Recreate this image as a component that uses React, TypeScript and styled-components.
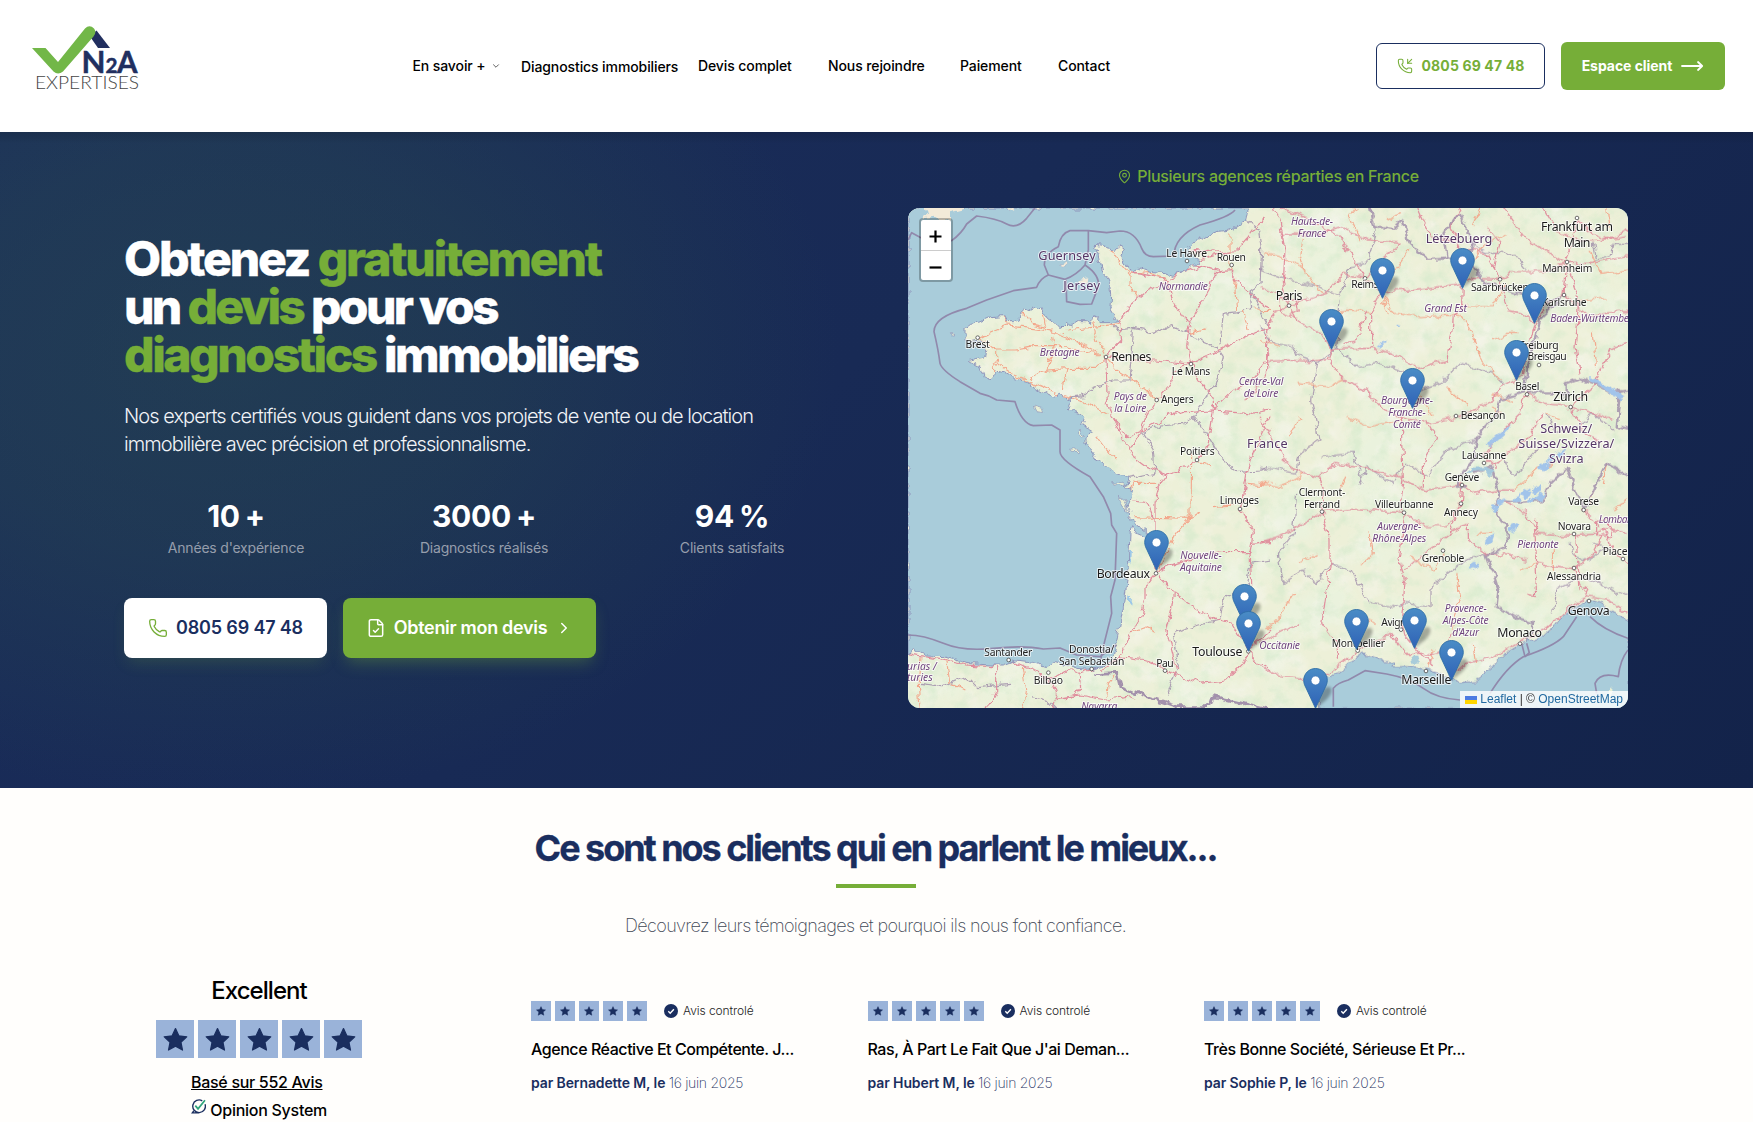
import React from "react";
import styled, { createGlobalStyle } from "styled-components";
import { ChevronDown, ChevronRight, FileCheck, MapPin, Phone, PhoneIncoming } from "lucide-react";

const NAVY = "#1a2e5f";
const GREEN = "#76ae38";

const GlobalStyle = createGlobalStyle`
  *, *::before, *::after { box-sizing: border-box; }
  body { margin: 0; background: #fffefc; font-family: Inter, "Noto Sans", sans-serif; color: #000; -webkit-font-smoothing: antialiased; }
  h1, h2, h3, p { margin: 0; }
  a { color: inherit; text-decoration: none; }
`;

const Page = styled.div`height: 1122px; overflow: hidden;`;

/* ---------- header ---------- */
const Header = styled.header`
  height: 132px; background: #fff; display: flex; align-items: flex-start;
  padding: 26px 28px 0 32px;
`;
const LogoLink = styled.a`display: block; width: 108px; height: 66px; flex: none;`;
const Nav = styled.nav`
  display: flex; flex: none; margin: 29px 0 0 272.500px; font-size: 14px; font-weight: 500; line-height: 20px;
`;
const NavItem = styled.a<{ $w: number; $gap: number; $drop?: number }>`
  display: flex; align-items: center; gap: 5px; white-space: nowrap; width: ${p => p.$w}px;
  margin-right: ${p => p.$gap}px; padding-top: ${p => p.$drop ?? 0}px; letter-spacing: -0.1px;
`;
const HeaderActions = styled.div`display: flex; align-items: center; gap: 16px; margin: 16px 0 0 auto;`;
const PhoneButton = styled.a`
  width: 169px; height: 46px; border: 1px solid ${NAVY}; border-radius: 6px; color: ${GREEN};
  display: flex; align-items: center; justify-content: center; gap: 9px; font-size: 14px; line-height: 20px; font-weight: 700;
  letter-spacing: 0.13px; white-space: nowrap; padding-bottom: 1px;
`;
const ClientButton = styled.a`
  width: 164px; height: 48px; border-radius: 6px; background: ${GREEN}; color: #fff; letter-spacing: -0.05px; padding-bottom: 1px;
  display: flex; align-items: center; justify-content: center; gap: 9px; font-size: 14px; font-weight: 700; white-space: nowrap;
`;

/* ---------- hero ---------- */
const Hero = styled.section`
  height: 656px; padding: 0 125px 0 124px; display: grid; grid-template-columns: 720px 720px; column-gap: 64px; align-items: start;
  background:
    linear-gradient(180deg, rgba(0,0,0,.12), transparent 12px),
    radial-gradient(ellipse 620px 450px at 220px 220px, rgba(50,92,75,.34), rgba(50,92,75,.25) 45%, transparent 100%),
    linear-gradient(135deg, #1a2d5b 0%, #182a55 45%, #13234a 100%);
`;
const Pitch = styled.div`padding-top: 103px;`;
const Title = styled.h1`
  font-size: 48px; line-height: 48px; font-weight: 800; color: #fff; white-space: nowrap; -webkit-text-stroke: 0.4px;
`;
const TitleLine = styled.span<{ $track: number }>`display: block; letter-spacing: ${p => p.$track}px;`;
const Accent = styled.span`color: ${GREEN};`;
const Lead = styled.p`
  margin-top: 23px; font-size: 20px; line-height: 28px; font-weight: 300; letter-spacing: -0.94px; color: #f1f3f7; white-space: nowrap;
`;
const Stats = styled.div`margin-top: 40px; display: grid; grid-template-columns: repeat(3, 1fr); gap: 24px; text-align: center;`;
const StatValue = styled.div`
  font-size: 30px; line-height: 36px; font-weight: 700; letter-spacing: -0.3px; color: #fff; display: flex; gap: 5px; justify-content: center;
`;
const StatLabel = styled.div`margin-top: 4px; font-size: 14px; line-height: 20px; letter-spacing: -0.2px; color: #969eac;`;
const Buttons = styled.div`margin-top: 40px; display: flex; gap: 16px;`;
const Cta = styled.a<{ $solid?: boolean }>`
  height: 60px; width: ${p => (p.$solid ? 253 : 203)}px; border-radius: 8px; display: flex; align-items: center; padding-bottom: 1px;
  justify-content: center; gap: 8px; font-size: 18px; font-weight: 600; white-space: nowrap; letter-spacing: ${p => (p.$solid ? -0.3 : -0.17)}px;
  background: ${p => (p.$solid ? GREEN : "#fff")}; color: ${p => (p.$solid ? "#fff" : NAVY)};
  box-shadow: 0 8px 16px -4px rgba(118,174,56,${p => (p.$solid ? 0.35 : 0.2)});
`;
const Agencies = styled.div`padding-top: 32px;`;
const AgencyTitle = styled.div`
  display: flex; justify-content: center; align-items: center; gap: 5px; height: 24px; margin-bottom: 20px;
  color: ${GREEN}; font-size: 16px; font-weight: 500; letter-spacing: -0.3px;
`;

/* ---------- map ---------- */
const MapFrame = styled.div`position: relative; width: 720px; height: 500px; border-radius: 12px; overflow: hidden; background: #aad3df;`;
const MapArt = styled.svg`display: block; width: 720px; height: 500px;`;
const Pin = styled.svg`position: absolute; width: 50px; height: 42px; overflow: visible;`;
const ZoomControl = styled.div`
  position: absolute; left: 10.500px; top: 10px; width: 34px; border: 2px solid rgba(0,0,0,.25); border-radius: 4px; background-clip: padding-box; background-color: #fff;
`;
const ZoomButton = styled.div`
  height: 30px; padding-top: 3px; display: flex; align-items: center; justify-content: center;
  & + & { border-top: 1px solid #ccc; }
`;
const Attribution = styled.div`
  position: absolute; right: 0; bottom: 0; height: 17px; padding: 0 5px; background: rgba(255,255,255,.8);
  display: flex; align-items: center; gap: 3px; font: 12px/17px "Liberation Sans", Arial, sans-serif; color: #333; white-space: nowrap;
`;
const MapLink = styled.a`color: #2169a0;`;
const TextLabel = styled.text<{ $kind: Kind }>`
  font-family: "Noto Sans", sans-serif; text-anchor: middle; paint-order: stroke; stroke: rgba(255,255,255,.7); stroke-width: 6px; stroke-linejoin: round;
  font-size: ${p => ({ town: 31, city: 37, region: 31, country: 38 })[p.$kind]}px;
  font-style: ${p => (p.$kind === "region" ? "italic" : "normal")};
  fill: ${p => ({ town: "#1e1e1e", city: "#1a1a1a", region: "#6f447e", country: "#553666" })[p.$kind]};
`;

type Kind = "town" | "city" | "region" | "country";
type Label = [string, number, number, number, Kind];

/* Both halves of the map use their own origin, three units to a pixel. */
const westLabels: Label[] = [
  ["Guernsey", 501, 330, 172, "country"], ["Jersey", 545, 419, 110, "country"], ["Le Havre", 860, 321, 122, "town"],
  ["Rouen", 994, 332, 88, "town"], ["Normandie", 850, 419, 148, "region"], ["Brest", 233, 595, 73, "town"],
  ["Bretagne", 479, 618, 120, "region"], ["Rennes", 694, 633, 121, "city"], ["Le Mans", 873, 674, 115, "town"],
  ["Centre-Val", 1083, 706, 134, "region"], ["de Loire", 1083, 741, 104, "region"], ["Pays de", 691, 751, 99, "region"],
  ["la Loire", 691, 786, 97, "region"], ["Angers", 832, 760, 98, "town"], ["Poitiers", 892, 916, 104, "town"],
  ["France", 1102, 893, 122, "country"], ["Limoges", 1018, 1063, 118, "town"], ["Nouvelle-", 903, 1227, 124, "region"],
  ["Aquitaine", 903, 1263, 126, "region"], ["Bordeaux", 670, 1283, 160, "city"], ["Toulouse", 952, 1517, 150, "city"],
  ["Pau", 795, 1550, 52, "town"], ["Donostia/", 575, 1508, 136, "town"], ["San Sebastián", 575, 1544, 196, "town"],
  ["Santander", 325, 1519, 144, "town"], ["Bilbao", 445, 1603, 88, "town"], ["Asturias /", 45, 1559, 130, "region"],
  ["Asturies", 44, 1594, 108, "region"], ["Navarra", 598, 1680, 108, "region"],
];
const eastLabels: Label[] = [
  ["Hauts-de-", 156, 75, 126, "region"], ["France", 156, 110, 86, "region"], ["Lëtzebuerg", 597, 130, 200, "country"],
  ["Frankfurt am", 951, 94, 216, "city"], ["Main", 951, 140, 80, "city"], ["Mannheim", 922, 217, 150, "town"],
  ["Reims", 315, 265, 82, "town"], ["Saarbrücken", 720, 272, 174, "town"], ["Karlsruhe", 913, 317, 134, "town"],
  ["Baden-Württemberg", 1003, 365, 264, "region"], ["Paris", 87, 299, 80, "city"], ["Grand Est", 557, 336, 128, "region"],
  ["Freiburg", 837, 446, 118, "town"], ["im Breisgau", 841, 481, 158, "town"], ["Bourgogne-", 441, 611, 156, "region"],
  ["Franche-", 441, 647, 112, "region"], ["Comté", 441, 683, 84, "region"], ["Besançon", 669, 658, 134, "town"],
  ["Basel", 802, 570, 72, "town"], ["Zürich", 932, 604, 104, "city"], ["Schweiz/", 919, 700, 156, "country"],
  ["Suisse/Svizzera/", 919, 744, 288, "country"], ["Svizra", 919, 790, 104, "country"], ["Lausanne", 672, 778, 134, "town"],
  ["Genève", 606, 842, 104, "town"], ["Annecy", 603, 948, 102, "town"], ["Clermont-", 186, 888, 140, "town"],
  ["Ferrand", 186, 924, 108, "town"], ["Villeurbanne", 433, 925, 176, "town"], ["Auvergne-", 418, 990, 132, "region"],
  ["Rhône-Alpes", 418, 1025, 162, "region"], ["Grenoble", 549, 1086, 128, "town"], ["Varese", 971, 916, 92, "town"],
  ["Novara", 943, 990, 100, "town"], ["Lombardia", 1083, 970, 134, "region"], ["Piemonte", 834, 1045, 124, "region"],
  ["Piacenza", 1090, 1066, 124, "town"], ["Alessandria", 942, 1139, 162, "town"], ["Genova", 986, 1245, 126, "city"],
  ["Provence-", 617, 1237, 126, "region"], ["Alpes-Côte", 617, 1273, 138, "region"], ["d'Azur", 617, 1308, 80, "region"],
  ["Avignon", 419, 1278, 110, "town"], ["Montpellier", 295, 1340, 160, "town"], ["Marseille", 499, 1452, 150, "city"],
  ["Monaco", 779, 1312, 134, "city"], ["Occitanie", 59, 1346, 122, "region"],
];

const westDots = "861,333 995,345 233,563 618,621 873,642 770,750 891,930 1020,1077 768,1270 1045,1504 795,1562 326,1530 445,1568 575,1557";
const eastDots = "87,317 315,235 951,54 921,186 720,238 912,285 837,495 801,583 932,621 588,648 672,789 606,855 603,911 186,935 432,938 549,1052 971,930 942,1002 1089,1077 942,1104 987,1203 780,1331 498,1413 293,1352 423,1289";

const westSea =
  "24,174 1050,174 1045,185 1040,210 1010,228 990,240 950,245 925,255 905,265 880,280 865,290 860,305 880,318 900,325 895,335 880,345 870,352 850,368 815,376 790,366 750,365 715,352 690,365 680,352 668,320 676,300 660,290 640,298 620,293 600,288 582,286 592,300 597,330 605,360 620,375 632,400 635,440 632,480 645,500 660,515 630,518 600,518 595,505 578,500 575,520 560,512 535,512 515,525 500,520 482,538 465,520 445,505 432,485 425,465 412,480 400,466 390,482 375,475 358,492 358,510 340,515 320,515 310,497 275,500 240,515 215,520 195,535 195,568 215,575 245,568 215,590 240,590 262,600 260,620 230,625 205,632 240,650 250,680 270,685 285,660 310,665 345,685 380,695 395,705 430,725 460,740 480,725 500,750 520,745 505,780 540,790 555,800 545,825 575,840 555,865 555,875 580,910 600,940 640,968 690,985 685,1005 650,1000 700,1020 690,1055 680,1080 685,1105 740,1145 745,1165 710,1150 695,1130 690,1150 685,1240 678,1320 670,1370 655,1450 640,1520 610,1550 575,1558 530,1555 500,1545 470,1535 440,1550 400,1537 350,1530 310,1545 270,1545 200,1540 130,1520 80,1518 45,1500 24,1515";
const eastSea =
  "176,1530 180,1480 195,1440 240,1410 270,1385 310,1365 340,1370 370,1385 400,1385 400,1400 440,1400 480,1405 510,1410 540,1420 575,1435 600,1448 640,1445 665,1435 680,1410 710,1385 735,1360 780,1332 820,1320 850,1305 880,1280 900,1255 925,1235 960,1210 985,1200 1020,1210 1050,1230 1110,1265 1110,1530";

const westRoads = [
  "870,348 905,325 990,300 1010,300 1045,260 1070,225 1100,200", "870,300 920,305 985,300", "880,345 930,355 960,365 990,362 1020,400 1048,430 1075,455 1110,470",
  "960,365 930,390 925,420 900,465 875,510 865,550 860,590 872,640 900,690 940,745", "690,365 720,370 760,380 800,390 850,365 900,350",
  "800,395 740,425 690,465 660,520 665,570 635,600 618,620", "800,395 815,450 845,500 870,512", "618,620 700,630 770,630 850,640 873,640 930,615 960,600 1050,555 1110,530",
  "618,620 620,700 622,760 635,800 680,860 725,840 740,800 770,750 800,715 830,660 870,640", "725,845 800,800 850,785 940,780 1010,785 1060,790 1110,780",
  "940,780 990,730 1045,700 1100,630 1110,560", "940,745 940,780 930,850 920,900 890,930 830,960 800,975 775,1010 765,1060 765,1140 768,1270",
  "725,845 690,890 670,870 635,800", "690,890 700,920 740,950 800,975", "700,1050 740,1055 760,1105",
  "768,1270 735,1310 735,1350 720,1410 690,1450 660,1520 610,1560", "768,1270 820,1330 880,1370 950,1410 1000,1425 1045,1500", "820,1330 815,1380 800,1440 830,1560",
  "600,1550 660,1520 740,1530 830,1575 900,1600 980,1590 1030,1540 1045,1505", "770,1265 830,1240 900,1220 960,1205 1050,1205 1055,1180 1060,1140 1020,1080 1030,1030 1040,970 1060,900 1110,800",
  "1050,1205 1055,1300 1040,1420 1045,1500", "1055,1180 1110,1175", "1045,1500 1080,1540 1110,1560", "1045,1500 1080,1470 1110,1440", "24,1510 100,1525 200,1545 270,1550 330,1530 400,1560 450,1590 500,1560 540,1570 600,1550",
  "450,1590 470,1640 455,1680", "540,1570 545,1610 520,1640 470,1645", "290,1550 290,1620 260,1680", "470,1645 540,1635 620,1650 700,1640",
];
const westMinor = [
  "235,563 270,545 320,525 370,530 420,535 460,545 500,560 540,580 600,610", "235,563 290,600 350,600 400,590 470,590 530,600 600,612", "290,600 290,630 280,660",
  "290,640 340,675 400,700 450,720 500,740 560,760 620,790", "440,660 520,655 590,655 618,625", "390,690 440,660 460,610 455,560", "618,620 590,570 580,520", "320,520 310,500",
  "360,480 400,520 440,530 430,480", "618,620 650,660 700,690 750,730 770,750", "630,300 660,340 690,375 690,410 715,440", "990,250 990,360", "870,550 920,535", "1060,480 1110,478",
  "1030,480 1045,540", "590,860 620,900 650,930", "872,910 870,1100 830,1150 800,1210 775,1260", "700,1100 870,1105 905,1080", "770,1000 700,1000 690,1020", "1040,1000 1100,1005",
  "690,1450 740,1430 770,1450", "60,1520 55,1600 60,1680", "370,1550 380,1620 370,1680", "1010,380 1005,420 1010,480", "660,520 600,530 500,540", "500,660 490,720", "890,930 930,950",
  "940,1070 1000,1065", "140,1530 150,1600 190,1620", "620,1640 625,1600 640,1580", "690,370 740,365 800,390",
];
const eastRoads = [
  "87,317 60,290 5,260", "87,317 70,250 75,150 60,60 40,24", "87,317 130,300 200,280 250,220 315,235", "87,317 40,340 20,390 20,520 -40,600",
  "87,317 110,360 180,400 215,447 205,475 155,485 90,480 20,485", "60,300 65,335 90,345 115,330 110,300 87,290 60,300", "315,235 365,275 440,270 530,262 605,250 640,235 720,238 760,215 850,215 915,190 951,60",
  "365,275 335,330 335,440", "215,447 330,445 400,460 480,505 560,480 575,400 580,350 605,320 607,250 600,150 570,80 600,24",
  "205,475 250,540 320,570 370,630 470,670 500,660 530,720 500,760 490,800 490,860", "425,640 425,730 430,835 420,900 432,935 430,1010 420,1080 435,1150 425,1250 430,1300 490,1370 520,1400",
  "500,670 600,650 700,600 725,560 790,525 800,450 820,380 860,310 912,285 920,190", "720,238 740,330 790,340 823,370", "60,24 150,60 240,110 280,180 315,235",
  "60,100 170,105 240,80 330,120 420,130 350,190 320,230", "470,24 510,110 580,120", "730,24 790,110 850,150 920,190 1000,190 1104,170", "850,24 890,90 960,130 1104,110",
  "951,60 1000,100 1040,120 1104,90", "912,285 990,350 1040,340 1104,330", "720,238 680,160 600,150", "920,190 940,250 960,300 945,440 960,520", "800,580 850,610 930,620 1000,640 1060,660",
  "800,580 780,640 740,680 690,740 670,770 710,810", "606,850 640,880 700,870 760,870", "606,850 570,860 500,870 430,840", "606,850 600,920 560,980 500,980 440,940",
  "600,920 570,1000 500,1050 435,1110", "570,1000 625,975 625,1020 680,1060 740,1065 800,1080", "186,935 150,960 60,1010 0,1030", "175,830 130,820 80,790 30,700 0,650",
  "186,935 280,925 350,930 430,940", "186,935 210,1020 210,1100 185,1270 235,1340 235,1380", "186,935 190,870 175,830 230,790 330,810 430,835", "180,1440 230,1400 295,1355 390,1300 430,1360 500,1360",
  "0,1400 60,1430 150,1440 180,1430", "0,1330 80,1290 120,1270", "490,1370 560,1350 575,1290", "574,1430 620,1390 700,1370 780,1325 850,1290 910,1240 960,1200 985,1190 1040,1200 1104,1240",
  "985,1190 940,1105 830,1090 825,1000 830,960", "830,1000 930,1005 1000,1000 1030,985 1104,1000", "825,1090 830,1190 800,1180", "1030,985 1060,1050 1104,1090", "942,1105 1000,1060 1030,1000",
  "960,1170 950,1040 945,1000", "970,930 1020,980", "730,900 800,940 830,1000", "1010,960 1050,960 1055,1010 1010,1005 1010,960", "320,330 290,420 250,435", "680,80 720,130 700,200",
  "1104,430 1050,450 1000,560 932,621", "932,621 960,680 1010,720", "700,800 740,760 800,720 850,640",
];
const eastMinor = [
  "10,160 60,170 130,200", "130,110 120,170 150,240 190,280", "300,120 270,50 290,24", "360,275 400,340 480,350 560,345 600,350", "370,300 385,345", "600,345 640,400 660,470 720,540",
  "640,180 680,130 740,100", "450,150 400,220", "640,80 660,24", "740,250 700,320 600,320", "990,150 1020,220 1104,210", "1040,24 1050,80", "960,300 1040,290", "780,400 740,400 700,420",
  "1000,400 1010,500", "110,550 200,560 250,540", "120,650 90,710", "260,650 330,680 425,660", "560,560 620,620", "480,590 520,650", "730,640 690,620", "260,830 240,880", "0,850 60,860 130,820",
  "100,1180 60,1250 20,1290", "330,1000 340,1060 300,1100", "450,1070 520,1110 550,1060", "650,1000 700,1000", "280,1240 350,1270", "120,1090 170,1060", "640,1330 650,1390", "575,1290 600,1200 590,1120",
  "780,1110 830,1090", "880,1050 880,1110", "1000,870 990,920", "1104,900 1060,930", "760,870 840,800 880,790", "1040,790 1030,850", "700,580 760,610", "860,640 900,660", "520,1350 500,1400",
  "380,60 420,40", "210,340 260,330 335,335", "0,420 60,440",
];
const westBorders = [
  "1040,215 1075,240 1085,300 1080,400 1050,420 1055,480 970,490 960,580", "632,518 650,540 700,535 760,548 810,530 860,545 900,570 950,590 970,620 955,680 920,740 880,800 850,820 780,825 725,850",
  "700,535 695,640 690,690 640,690 570,720 550,740 500,745", "730,850 760,900 765,970 690,985", "880,800 920,850 960,920 1010,965 1080,960 1110,950",
  "1110,1230 1050,1240 1040,1300 970,1350 960,1410 900,1425 820,1450 835,1540 800,1640", "1050,420 1110,540", "60,1600 130,1610 200,1580 230,1610 330,1600", "400,1640 440,1650 470,1680",
];
const eastBorders = [
  "330,24 345,60 345,100 320,190 270,200 240,290 180,260 80,240 0,210", "240,300 230,440 290,500 350,490 420,510 480,570 540,550 600,490 700,520 740,560", "230,440 170,490 155,600 180,720 120,760 110,820 0,800",
  "0,380 40,430 100,440 110,465 170,490", "110,880 100,1000 55,1060 70,1150 130,1110 170,1150 210,1090 270,1110 330,1210 400,1220 430,1210", "300,860 320,800 400,850 440,790 500,830 560,750 650,720",
  "430,1210 510,1220 510,1170 540,1140 620,1080 680,1060", "180,770 280,760 310,850", "640,140 690,160 760,160 800,210", "1000,130 1010,180 1050,170 1060,130 1104,130", "1000,1030 1040,1040 980,1080 940,1060 930,1030",
  "860,640 880,690 940,690 1000,640 1060,690", "880,1240 890,1170 970,1130 1060,1170 1104,1190", "730,780 760,830 840,740",
];
const frontiers = [
  "330,24 340,80 400,90 430,60 450,130 510,180 560,175 620,185 680,250", "560,175 550,100 580,60 600,40 620,80 640,130 620,180", "680,250 740,270 860,300 910,290 840,360 820,430 800,520 790,580 720,600 710,640 650,720 640,780 590,840 590,860 620,860",
  "800,580 880,580 920,590 920,550 960,535 1000,550 1060,580 1104,570", "640,820 690,800 720,880 700,930 740,980 740,1040 680,1065 700,1120 715,1170 710,1220 780,1260 820,1270 800,1330",
  "720,900 780,905 850,900 870,850 920,800 950,880 980,930 1000,870 1040,790 1104,830", "1080,570 1070,680 1104,690",
];
const westMarine = [
  "M24,270 35,248 60,262 100,270 155,272 Q185,250 200,222 L230,198 Q290,205 320,222 T380,205 L405,174",
  "M1005,180 Q990,200 900,225 Q822,260 822,318 L760,320 Q735,320 725,295 Q705,243 660,243 L620,248 565,242 510,242 Q482,250 475,290 Q433,310 433,345 L445,375 Q420,385 410,412 L340,422 260,450 200,475 Q102,500 102,545 Q115,600 120,640 Q125,660 180,695 L240,730 Q265,735 290,750 L345,755 Q365,820 400,827 L455,825 480,840 V905 Q480,930 570,980 L610,1040 632,1090 635,1125 650,1150 645,1290 632,1340 635,1390 610,1490 600,1540",
  "M565,242 V300 L555,345 Q530,375 495,388 L445,375", "M555,345 Q600,375 595,410 L575,462 540,463 500,455 498,390",
  "M24,1455 Q70,1455 130,1480 T280,1495 T430,1497 L480,1494 530,1515 600,1520 650,1485",
];
const eastMarine = [
  "M220,1520 V1465 Q230,1450 265,1440 L315,1412 380,1422 Q450,1435 490,1465 T600,1500", "M690,1480 Q740,1400 790,1370 Q880,1340 910,1310 L950,1250", "M785,1330 795,1370 808,1358 800,1330",
  "M990,1250 Q1030,1290 1104,1315", "M1104,1350 Q1080,1380 1075,1430 Q1020,1415 1005,1450 L1010,1480",
];

const pins: [number, number][] = [
  [1423, 272], [1664, 240], [1271, 423], [1879, 347], [1825, 517], [1513, 601], [745, 1088], [1010, 1250], [1021, 1330], [1346, 1325], [1519, 1322], [1630, 1418], [1222, 1500],
];

const Lines = ({ data, stroke, width, opacity = 1 }: { data: string[]; stroke: string; width: number; opacity?: number }) => (
  <g fill="none" stroke={stroke} strokeWidth={width} opacity={opacity} strokeLinejoin="round">
    {data.map(d => <polyline key={d} points={d} />)}
  </g>
);
const Dots = ({ data }: { data: string }) => (
  <g fill="#fff" stroke="#555" strokeWidth={2.6}>
    {data.split(" ").map(d => {
      const [x, y] = d.split(",");
      return <circle key={d} cx={x} cy={y} r={5.5} />;
    })}
  </g>
);
const Labels = ({ data }: { data: Label[] }) => (
  <>
    {data.map(([t, x, y, w, k]) => (
      <TextLabel key={t + y} $kind={k} x={x} y={y} textLength={w}>{t}</TextLabel>
    ))}
  </>
);

const FranceMap = () => (
  <MapArt viewBox="0 0 2160 1500">
    <defs>
      <filter id="rough" x="0" y="0" width="2160" height="1500" filterUnits="userSpaceOnUse">
        <feTurbulence type="fractalNoise" baseFrequency="0.035" numOctaves="3" seed="4" />
        <feDisplacementMap in="SourceGraphic" scale="26" xChannelSelector="R" yChannelSelector="G" />
      </filter>
      <filter id="woods" x="0" y="0" width="2160" height="1500" filterUnits="userSpaceOnUse">
        <feTurbulence type="fractalNoise" baseFrequency="0.022" numOctaves="5" seed="11" />
        <feColorMatrix values="0 0 0 0 .66  0 0 0 0 .82  0 0 0 0 .60  3 0 0 0 -1.42" />
      </filter>
      <filter id="heath" x="0" y="0" width="2160" height="1500" filterUnits="userSpaceOnUse">
        <feTurbulence type="fractalNoise" baseFrequency="0.006" numOctaves="4" seed="23" />
        <feColorMatrix values="0 0 0 0 .82  0 0 0 0 .90  0 0 0 0 .74  0 3 0 0 -1.15" />
      </filter>
      <filter id="plain" x="0" y="0" width="2160" height="1500" filterUnits="userSpaceOnUse">
        <feTurbulence type="fractalNoise" baseFrequency="0.012" numOctaves="4" seed="37" />
        <feColorMatrix values="0 0 0 0 .95  0 0 0 0 .93  0 0 0 0 .90  0 0 3 0 -1.5" />
      </filter>
    </defs>
    <rect width="2160" height="1500" fill="#edf0d8" />
    <rect width="2160" height="1500" filter="url(#heath)" opacity=".75" />
    <rect width="2160" height="1500" filter="url(#plain)" opacity=".5" />
    <rect width="2160" height="1500" filter="url(#woods)" opacity=".6" />
    <g filter="url(#rough)">
      <g transform="translate(-24 -174)">
        <Lines data={westBorders} stroke="#a391ac" width={3.6} opacity={0.85} />
        <Lines data={westMinor} stroke="#f3a78c" width={3.4} />
        <Lines data={westRoads} stroke="#e08c9c" width={3.6} />
        <Lines data={["580,1575 650,1570 660,1610 740,1640 830,1670 930,1670 940,1640 1110,1680"]} stroke="#a391ac" width={8} />
        <polygon points={westSea} fill="#a9ccda" stroke="#8f95bb" strokeWidth="3" />
        <polygon points="66,165 80,190 70,205 100,200 150,215 150,190 190,180 195,165" fill="#f3ead8" />
        <polygon points="318,172 345,172 335,182" fill="#f3ead8" />
        <polygon points="480,345 500,332 498,350" fill="#f1ead9" stroke="#8f95bb" />
        <polygon points="535,390 565,385 562,400 540,402" fill="#f1ead9" />
        <polygon points="400,768 425,775 428,788 408,785" fill="#e9efd5" stroke="#8f95bb" strokeWidth="2" />
        <polygon points="535,838 552,855 548,862 536,850" fill="#e9efd5" stroke="#8f95bb" strokeWidth="2" />
        <polygon points="635,995 665,998 680,1008 650,1004" fill="#e9efd5" stroke="#8f95bb" strokeWidth="2" />
        <polygon points="655,1035 675,1050 690,1085 668,1065" fill="#e9efd5" stroke="#8f95bb" strokeWidth="2" />
        <polygon points="515,900 530,900 532,908 520,907" fill="#e9efd5" stroke="#8f95bb" strokeWidth="2" />
        <polygon points="145,545 155,545 158,552 148,552" fill="#e9efd5" stroke="#8f95bb" strokeWidth="2" />
        <polygon points="688,1200 696,1205 694,1240 688,1235" fill="#9cc7e8" />
        <polygon points="685,1330 693,1335 691,1370 684,1362" fill="#9cc7e8" />
      </g>
      <g transform="translate(1056 -24)">
        <Lines data={eastBorders} stroke="#a391ac" width={3.6} opacity={0.85} />
        <Lines data={eastMinor} stroke="#f3a78c" width={3.4} />
        <Lines data={eastRoads} stroke="#e08c9c" width={3.6} />
        <Lines data={frontiers} stroke="#a391ac" width={7} opacity={0.85} />
        <polygon points="615,822 640,803 680,800 705,820 690,830 670,812 640,815" fill="#a4c8dc" />
        <polygon points="680,730 750,675 740,695 690,740" fill="#a2c4ea" />
        <polygon points="985,530 1060,565 1095,590 1080,598 1030,565 985,542" fill="#a2c4ea" />
        <polygon points="410,368 425,372 420,380 410,376" fill="#a2c4ea" />
        <polygon points="350,440 375,422 378,428 358,442" fill="#a2c4ea" />
        <polygon points="450,1370 475,1370 480,1390 455,1392" fill="#a9ccda" />
        {[[770, 895], [800, 880], [830, 870], [850, 800], [870, 780], [815, 900], [705, 925], [688, 1022], [720, 905], [760, 985], [640, 1098], [900, 760], [840, 890]].map(([x, y]) => (
          <path key={`${x}-${y}`} d={`M${x - 14} ${y + 6}l10-16 8 4 12-8-6 18-12 8z`} fill="#a2c4ea" />
        ))}
        <polygon points={eastSea} fill="#a9ccda" stroke="#8f95bb" strokeWidth="3" />
        <polygon points="1045,1465 1058,1470 1052,1500 1042,1490" fill="#e9efd5" />
      </g>
    </g>
    <g fill="none" stroke="#9189ac" strokeWidth="5" strokeLinejoin="round">
      <g transform="translate(-24 -174)">{westMarine.map(d => <path key={d} d={d} />)}</g>
      <g transform="translate(1056 -24)">{eastMarine.map(d => <path key={d} d={d} />)}</g>
    </g>
    <g transform="translate(-24 -174)"><Dots data={westDots} /><Labels data={westLabels} /></g>
    <g transform="translate(1056 -24)"><Dots data={eastDots} /><Labels data={eastLabels} /></g>
  </MapArt>
);

const MapPinMarker = ({ x, y }: { x: number; y: number }) => (
  <Pin style={{ left: x / 3 - 12.5, top: y / 3 - 40.5 }} viewBox="0 0 50 42">
    <defs>
      <linearGradient id="pinFill" x1="0" y1="0" x2="0" y2="1"><stop offset="0" stopColor="#4a8cc6" /><stop offset="1" stopColor="#2f62b6" /></linearGradient>
      <filter id="pinBlur" x="-50%" y="-50%" width="200%" height="200%"><feGaussianBlur stdDeviation="1.8" /></filter>
    </defs>
    <path d="M13 40 L17 25 Q24 16 28 20 Q30 25 23 32 Z" fill="#000" opacity=".3" filter="url(#pinBlur)" />
    <path d="M12.5 .5C6 .5 .7 5.7 .7 12.3c0 3 1 5 2.3 7.6L12.5 40.3 22 19.9c1.3-2.600 2.300-4.600 2.300-7.600C24.300 5.700 19 .5 12.500 .5z" fill="url(#pinFill)" stroke="#2e6da6" strokeWidth=".9" />
    <circle cx="12.500" cy="12.500" r="4.400" fill="#fff" stroke="#3b72b4" strokeWidth=".6" />
  </Pin>
);

/* ---------- reviews ---------- */
const Reviews = styled.section`padding-top: 40px;`;
const Intro = styled.div`padding-right: 2px; text-align: center; white-space: nowrap;`;
const Heading = styled.h2`
  font-size: 36px; line-height: 40px; font-weight: 700; letter-spacing: -2.04px; color: ${NAVY}; -webkit-text-stroke: 0.3px;
`;
const Underline = styled.div`width: 80px; height: 4px; margin: 16px auto 0; background: ${GREEN};`;
const SubHeading = styled.p`margin-top: 24px; font-size: 18px; line-height: 28px; font-weight: 250; letter-spacing: -0.62px; color: #3f4856;`;
const ReviewRow = styled.div`display: flex; padding-left: 124px; margin-top: 34px;`;
const Summary = styled.div`width: 270px; display: flex; flex-direction: column; align-items: center;`;
const Grade = styled.h3`margin-top: 1px; font-size: 24px; line-height: 32px; font-weight: 500; letter-spacing: -0.95px;`;
const Stars = styled.div<{ $mt: number }>`display: flex; gap: 4px; margin-top: ${p => p.$mt}px;`;
const StarBox = styled.span<{ $size: number }>`
  width: ${p => p.$size}px; height: ${p => p.$size}px; background: #9ab3d9; color: ${NAVY}; display: flex; align-items: center; justify-content: center;
`;
const SourceBlock = styled.div`width: 136px; margin-top: 12px; font-size: 16px; line-height: 24px; font-weight: 500;`;
const BasedOn = styled.div`text-decoration: underline; letter-spacing: -0.3px; white-space: nowrap;`;
const Source = styled.div`display: flex; gap: 4px; margin-top: 4px; letter-spacing: -0.27px; white-space: nowrap;`;
const Cards = styled.div`display: grid; grid-template-columns: repeat(3, 336.500px); margin: 27px 0 0 137px;`;
const Card = styled.article`white-space: nowrap;`;
const CardTop = styled.div`display: flex; align-items: center; gap: 17px;`;
const Checked = styled.span`
  display: flex; align-items: center; gap: 5px; font-size: 12px; line-height: 18px; padding-bottom: 1px; font-weight: 300; letter-spacing: -0.08px; color: #1c1c1c;
`;
const CardTitle = styled.h3`margin-top: 16px; font-size: 16px; line-height: 24px; font-weight: 500; letter-spacing: -0.45px;`;
const Author = styled.p`margin-top: 12px; font-size: 14px; line-height: 20px; font-weight: 600; letter-spacing: -0.11px; color: ${NAVY};`;
const ReviewDate = styled.span`font-weight: 250; letter-spacing: -0.3px;`;

const StarRow = ({ size, glyph, mt = 0 }: { size: number; glyph: number; mt?: number }) => (
  <Stars $mt={mt}>
    {[0, 1, 2, 3, 4].map(i => (
      <StarBox key={i} $size={size}>
        <svg width={glyph} height={glyph} viewBox="0 0 24 24" fill="currentColor" stroke="currentColor" strokeWidth="1.200" strokeLinejoin="round">
          <path d="M12 1.500l3.200 7 7.600.9-5.600 5.200 1.500 7.500L12 18.400l-6.700 3.700 1.500-7.500L1.200 9.400l7.600-.9z" />
        </svg>
      </StarBox>
    ))}
  </Stars>
);

const Logo = () => (
  <svg width="108" height="66" viewBox="0 0 108 66">
    <path d="M58 10.500L64.500 4.500 78 22H66z" fill="#212f5f" />
    <path d="M0 22h13.500l12.500 14L53 2.500Q57.500-2 62 2.500q3 4-.5 8L31 45.500q-5 4-9.500 0z" fill="#72b748" />
    <g fill="#212f5f" stroke="#212f5f" strokeWidth=".5" fontFamily="Lato, sans-serif" fontWeight="700">
      <text x="49.500" y="46.500" fontSize="30.500" textLength="24" lengthAdjust="spacingAndGlyphs">N</text>
      <text x="73.500" y="46.500" fontSize="21" textLength="12" lengthAdjust="spacingAndGlyphs">2</text>
      <text x="85" y="46.500" fontSize="30.500" textLength="20.500" lengthAdjust="spacingAndGlyphs">A</text>
    </g>
    <text x="3" y="63" fontFamily="Lato, sans-serif" fontWeight="300" fontSize="18.500" fill="#454545" textLength="104" lengthAdjust="spacingAndGlyphs">EXPERTISES</text>
  </svg>
);

const reviews = [
  ["Agence Réactive Et Compétente. J...", "par Bernadette M, le"],
  ["Ras, À Part Le Fait Que J'ai Deman...", "par Hubert M, le"],
  ["Très Bonne Société, Sérieuse Et Pr...", "par Sophie P, le"],
];

export default function App() {
  return (
    <Page>
      <GlobalStyle />
      <Header>
        <LogoLink><Logo /></LogoLink>
        <Nav>
          <NavItem $w={88} $gap={20.5}>En savoir +<ChevronDown size={14} strokeWidth={1.5} /></NavItem>
          <NavItem $w={157} $gap={20} $drop={2}>Diagnostics immobiliers</NavItem>
          <NavItem $w={94} $gap={36}>Devis complet</NavItem>
          <NavItem $w={96} $gap={36}>Nous rejoindre</NavItem>
          <NavItem $w={62} $gap={36}>Paiement</NavItem>
          <NavItem $w={53} $gap={0}>Contact</NavItem>
        </Nav>
        <HeaderActions>
          <PhoneButton><PhoneIncoming size={16} strokeWidth={1.6} />0805 69 47 48</PhoneButton>
          <ClientButton>
            Espace client
            <svg width="23" height="12" viewBox="0 0 23 12" fill="none" stroke="currentColor" strokeWidth="1.800" strokeLinecap="round" strokeLinejoin="round"><path d="M1 6h20M17 2l4.200 4L17 10" /></svg>
          </ClientButton>
        </HeaderActions>
      </Header>

      <Hero>
        <Pitch>
          <Title>
            <TitleLine $track={-2.18}>Obtenez <Accent>gratuitement</Accent></TitleLine>
            <TitleLine $track={-2.7}>un <Accent>devis</Accent> pour vos</TitleLine>
            <TitleLine $track={-2.45}><Accent>diagnostics</Accent> immobiliers</TitleLine>
          </Title>
          <Lead>Nos experts certifiés vous guident dans vos projets de vente ou de location<br />immobilière avec précision et professionnalisme.</Lead>
          <Stats>
            {[["10", "+", "Années d'expérience"], ["3000", "+", "Diagnostics réalisés"], ["94", "%", "Clients satisfaits"]].map(([n, s, l]) => (
              <div key={l}><StatValue><span>{n}</span><span>{s}</span></StatValue><StatLabel>{l}</StatLabel></div>
            ))}
          </Stats>
          <Buttons>
            <Cta><Phone size={20} strokeWidth={1.6} color={GREEN} />0805 69 47 48</Cta>
            <Cta $solid><FileCheck size={20} strokeWidth={1.8} />Obtenir mon devis<ChevronRight size={18} strokeWidth={2} /></Cta>
          </Buttons>
        </Pitch>
        <Agencies>
          <AgencyTitle><MapPin size={15} strokeWidth={1.8} />Plusieurs agences réparties en France</AgencyTitle>
          <MapFrame>
            <FranceMap />
            {pins.map(([x, y]) => <MapPinMarker key={`${x}-${y}`} x={x} y={y} />)}
            <ZoomControl>
              <ZoomButton><svg width="13" height="13" viewBox="0 0 13 13" stroke="#000" strokeWidth="2.200"><path d="M.500 6.500h12M6.500 .5v12" /></svg></ZoomButton>
              <ZoomButton><svg width="13" height="13" viewBox="0 0 13 13" stroke="#000" strokeWidth="2.200"><path d="M.500 6.500h12" /></svg></ZoomButton>
            </ZoomControl>
            <Attribution>
              <svg width="12" height="8" viewBox="0 0 12 8"><path fill="#4c7be1" d="M0 0h12v4H0z" /><path fill="#ffd500" d="M0 4h12v4H0z" /></svg>
              <span><MapLink>Leaflet</MapLink> | © <MapLink>OpenStreetMap</MapLink></span>
            </Attribution>
          </MapFrame>
        </Agencies>
      </Hero>

      <Reviews>
        <Intro>
          <Heading>Ce sont nos clients qui en parlent le mieux...</Heading>
          <Underline />
          <SubHeading>Découvrez leurs témoignages et pourquoi ils nous font confiance.</SubHeading>
        </Intro>
        <ReviewRow>
          <Summary>
            <Grade>Excellent</Grade>
            <StarRow size={38} glyph={25} mt={13} />
            <SourceBlock>
              <BasedOn>Basé sur 552 Avis</BasedOn>
              <Source>
                <svg width="17" height="17" viewBox="0 0 17 17" fill="none">
                  <path d="M12.500 2.200A7 7 0 1 0 15.600 6M3 13.500L1.500 15.600H9" stroke={NAVY} strokeWidth="1.500" />
                  <path d="M4.800 7.500l3 3.600L15.500 1.500" stroke="#2fa57c" strokeWidth="1.900" />
                </svg>
                Opinion System
              </Source>
            </SourceBlock>
          </Summary>
          <Cards>
            {reviews.map(([title, by]) => (
              <Card key={title}>
                <CardTop>
                  <StarRow size={20} glyph={10} />
                  <Checked>
                    <svg width="14" height="14" viewBox="0 0 14 14"><circle cx="7" cy="7" r="7" fill={NAVY} /><path d="M4.300 7.300l1.900 1.900 3.700-4" fill="none" stroke="#fff" strokeWidth="1.400" /></svg>
                    Avis controlé
                  </Checked>
                </CardTop>
                <CardTitle>{title}</CardTitle>
                <Author>{by} <ReviewDate>16 juin 2025</ReviewDate></Author>
              </Card>
            ))}
          </Cards>
        </ReviewRow>
      </Reviews>
    </Page>
  );
}
